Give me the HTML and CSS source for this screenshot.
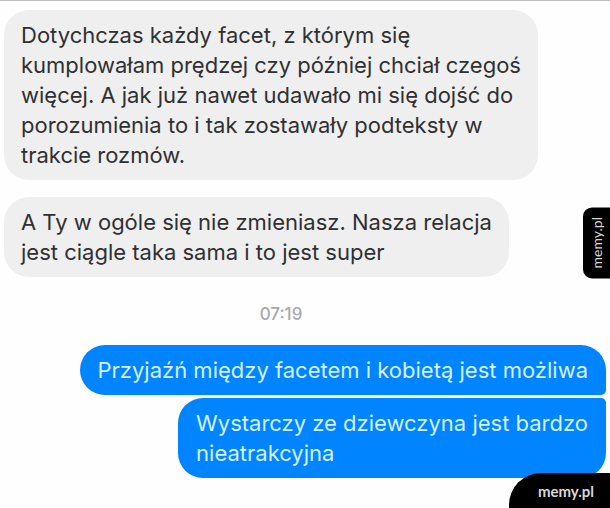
FILE: index.html
```html
<!DOCTYPE html>
<html lang="pl">
<head>
<meta charset="utf-8">
<meta name="viewport" content="width=device-width, initial-scale=1">
<title>memy.pl</title>
<link rel="stylesheet" href="styles.css">
</head>
<body>
<main class="chat">
  <p class="bubble received">Dotychczas każdy facet, z którym się<br>kumplowałam prędzej czy później chciał czegoś<br>więcej. A jak już nawet udawało mi się dojść do<br>porozumienia to i tak zostawały podteksty w<br>trakcie rozmów.</p>
  <p class="bubble received">A Ty w ogóle się nie zmieniasz. Nasza relacja<br>jest ciągle taka sama i to jest super</p>
  <time class="time" datetime="07:19">07:19</time>
  <div class="sent-group">
    <p class="bubble sent">Przyjaźń między facetem i kobietą jest możliwa</p>
    <p class="bubble sent">Wystarczy ze dziewczyna jest bardzo<br>nieatrakcyjna</p>
  </div>
</main>
<div class="tag tag-side">memy.pl</div>
<div class="tag tag-corner">memy.pl</div>
</body>
</html>
```
FILE: styles.css
```css
* {
  box-sizing: border-box;
}

body {
  margin: 0;
  min-height: 100vh;
  position: relative;
  overflow: hidden;
  background: #fefefe;
  border-top: 1px solid #bdbdbf;
  font-family: Inter, "Liberation Sans", sans-serif;
}

.chat {
  display: flex;
  flex-direction: column;
  align-items: flex-start;
  gap: 17px;
  padding: 9px 4px 0;
}

.bubble {
  margin: 0;
  padding: 10px 17px;
  border-radius: 25px;
  font-size: 22px;
  line-height: 30px;
  white-space: nowrap;
}

.received {
  background: #efefef;
  color: #303032;
}

.time {
  align-self: center;
  margin: 10px 0 4px;
  padding-right: 48px;
  color: #a9a9ab;
  font-size: 17px;
  font-weight: 500;
  line-height: 20px;
}

.sent-group {
  align-self: stretch;
  display: flex;
  flex-direction: column;
  align-items: flex-end;
  gap: 3px;
}

.sent {
  padding: 10px 18px;
  background: #0084ff;
  color: #d3f1ff;
}

.sent:first-child {
  border-bottom-right-radius: 5px;
}

.sent:last-child {
  border-top-right-radius: 5px;
}

.tag {
  position: absolute;
  right: 0;
  background: #000;
  color: #d8d8d8;
  font-family: Lato, sans-serif;
  line-height: 20px;
}

.tag-side {
  top: 206px;
  padding: 10px 4px 10px 3px;
  border-radius: 0 9px 9px 0;
  font-size: 14px;
  writing-mode: vertical-rl;
  transform: rotate(180deg);
}

.tag-corner {
  bottom: 0;
  padding: 8px 16px 7px 29px;
  border-top-left-radius: 32px;
  font-size: 15px;
  font-weight: 700;
}
```
